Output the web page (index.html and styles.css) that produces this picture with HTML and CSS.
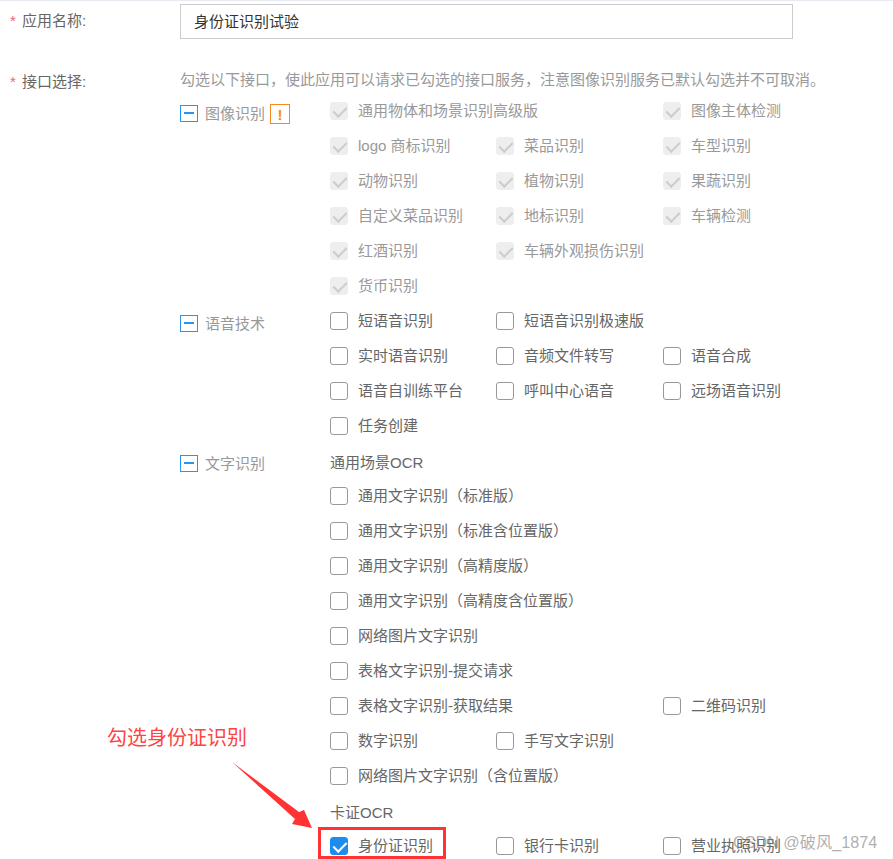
FILE: index.html
```html
<!DOCTYPE html>
<html lang="zh">
<head>
<meta charset="utf-8">
<title>身份证识别试验</title>
<link rel="stylesheet" href="styles.css">
</head>
<body>
<main class="form">
  <div class="field name-field">
    <label class="field-label"><span class="star">*</span>应用名称:</label>
    <div class="input">身份证识别试验</div>
  </div>
  <div class="field api-field">
    <label class="field-label"><span class="star">*</span>接口选择:</label>
    <div class="field-body">
      <p class="hint">勾选以下接口，使此应用可以请求已勾选的接口服务，注意图像识别服务已默认勾选并不可取消。</p>

      <section class="group">
        <div class="group-head"><span class="minus"></span><span class="group-name">图像识别</span><span class="warn">!</span></div>
        <div class="items disabled">
          <div class="item wide"><span class="box on"></span>通用物体和场景识别高级版</div>
          <div class="item"><span class="box on"></span>图像主体检测</div>
          <div class="item"><span class="box on"></span>logo 商标识别</div>
          <div class="item"><span class="box on"></span>菜品识别</div>
          <div class="item"><span class="box on"></span>车型识别</div>
          <div class="item"><span class="box on"></span>动物识别</div>
          <div class="item"><span class="box on"></span>植物识别</div>
          <div class="item"><span class="box on"></span>果蔬识别</div>
          <div class="item"><span class="box on"></span>自定义菜品识别</div>
          <div class="item"><span class="box on"></span>地标识别</div>
          <div class="item"><span class="box on"></span>车辆检测</div>
          <div class="item"><span class="box on"></span>红酒识别</div>
          <div class="item wide-end"><span class="box on"></span>车辆外观损伤识别</div>
          <div class="item"><span class="box on"></span>货币识别</div>
        </div>
      </section>

      <section class="group">
        <div class="group-head"><span class="minus"></span><span class="group-name">语音技术</span></div>
        <div class="items">
          <div class="item"><span class="box"></span>短语音识别</div>
          <div class="item wide-end"><span class="box"></span>短语音识别极速版</div>
          <div class="item"><span class="box"></span>实时语音识别</div>
          <div class="item"><span class="box"></span>音频文件转写</div>
          <div class="item"><span class="box"></span>语音合成</div>
          <div class="item"><span class="box"></span>语音自训练平台</div>
          <div class="item"><span class="box"></span>呼叫中心语音</div>
          <div class="item"><span class="box"></span>远场语音识别</div>
          <div class="item"><span class="box"></span>任务创建</div>
        </div>
      </section>

      <section class="group">
        <div class="group-head"><span class="minus"></span><span class="group-name">文字识别</span></div>
        <div class="items">
          <div class="sub-title">通用场景OCR</div>
          <div class="item full"><span class="box"></span>通用文字识别（标准版）</div>
          <div class="item full"><span class="box"></span>通用文字识别（标准含位置版）</div>
          <div class="item full"><span class="box"></span>通用文字识别（高精度版）</div>
          <div class="item full"><span class="box"></span>通用文字识别（高精度含位置版）</div>
          <div class="item full"><span class="box"></span>网络图片文字识别</div>
          <div class="item full"><span class="box"></span>表格文字识别-提交请求</div>
          <div class="item wide"><span class="box"></span>表格文字识别-获取结果</div>
          <div class="item"><span class="box"></span>二维码识别</div>
          <div class="item"><span class="box"></span>数字识别</div>
          <div class="item wide-end"><span class="box"></span>手写文字识别</div>
          <div class="item full"><span class="box"></span>网络图片文字识别（含位置版）</div>
          <div class="sub-title">卡证OCR</div>
          <div class="item"><span class="box checked"></span>身份证识别</div>
          <div class="item"><span class="box"></span>银行卡识别</div>
          <div class="item"><span class="box"></span>营业执照识别</div>
        </div>
      </section>
    </div>
  </div>
</main>

<div class="note">勾选身份证识别</div>
<svg class="arrow" width="893" height="859" viewBox="0 0 893 859" aria-hidden="true">
  <path d="M232 762 L299 812 L304 810 L312 828 L292 824 L295 819 Z" fill="#f33"></path>
</svg>
<div class="highlight"></div>
<div class="watermark">CSDN @破风_1874</div>
</body>
</html>
```
FILE: styles.css
```css
* { box-sizing: border-box; }
html, body { margin: 0; padding: 0; }
body {
  width: 893px;
  height: 859px;
  overflow: hidden;
  position: relative;
  background: #fff;
  border-top: 1px solid #e8eaf1;
  font-family: "Liberation Sans", "Noto Sans CJK SC", sans-serif;
  font-size: 15px;
  color: #666;
}
.form { padding-left: 10px; }
.field { display: flex; }
.name-field { padding-top: 3px; height: 59px; }
.field-label {
  width: 170px;
  flex: none;
  display: flex;
  color: #666;
  line-height: 20px;
  padding-top: 7px;
}
.api-field .field-label { padding-top: 12px; }
.star { color: #f5607a; width: 12px; flex: none; font-size: 15px; }
.input {
  width: 613px;
  height: 35px;
  border: 1px solid #ccc;
  padding-left: 13px;
  line-height: 34px;
  color: #333;
}
.field-body { flex: 1; }
.hint {
  margin: 0;
  padding-top: 10px;
  height: 32.5px;
  line-height: 20px;
  color: #999;
  white-space: nowrap;
}
.group { display: flex; }
.group-head {
  width: 150px;
  flex: none;
  display: flex;
  align-items: center;
  height: 20px;
  margin-top: 10.5px;
  color: #999;
}
.minus {
  width: 18px;
  height: 17px;
  border: 1px solid #2a95f0;
  display: flex;
  align-items: center;
  justify-content: center;
  margin-right: 7px;
}
.minus::before {
  content: "";
  width: 10px;
  height: 2px;
  background: #2a95f0;
}
.group-name { padding-bottom: 2px; }
.warn {
  width: 20px;
  height: 20px;
  margin-left: 5px;
  margin-top: 2px;
  border: 1px solid #f58a1f;
  color: #f58a1f;
  font-size: 15px;
  font-weight: 700;
  line-height: 19px;
  text-align: center;
}
.items {
  width: 500px;
  display: grid;
  grid-template-columns: 166px 167px 167px;
  grid-auto-rows: 35px;
}
.item {
  display: flex;
  align-items: center;
  padding-bottom: 2px;
  white-space: nowrap;
  color: #666;
}
.wide { grid-column: span 2; }
.wide-end { grid-column: span 2; }
.full { grid-column: 1 / -1; }
.disabled .item { color: #999; }
.sub-title {
  grid-column: 1 / -1;
  padding-top: 10px;
  line-height: 20px;
  color: #666;
}
.box {
  width: 18px;
  height: 18px;
  flex: none;
  margin-right: 10px;
  margin-top: 3px;
  border: 1px solid #999;
  border-radius: 3px;
  position: relative;
}
.box.on {
  background: #eee;
  border-color: #eee;
}
.box.on::after, .box.checked::after {
  content: "";
  position: absolute;
  left: 5px;
  top: 1px;
  width: 6px;
  height: 11px;
  border: solid #ccc;
  border-width: 0 2px 2px 0;
  transform: rotate(45deg);
}
.box.checked {
  background: #1b8cf0;
  border-color: #1b8cf0;
}
.box.checked::after { border-color: #fff; }

.note {
  position: absolute;
  left: 107px;
  top: 722px;
  font-size: 20px;
  line-height: 30px;
  color: #f44;
  white-space: nowrap;
}
.arrow { position: absolute; left: 0; top: -1px; }
.highlight {
  position: absolute;
  left: 318px;
  top: 826px;
  width: 128px;
  height: 32px;
  border: 3px solid #f33;
}
.watermark {
  position: absolute;
  left: 733px;
  top: 829px;
  font-size: 16.2px;
  line-height: 24px;
  color: rgba(120, 120, 120, 0.6);
  white-space: nowrap;
}
```
